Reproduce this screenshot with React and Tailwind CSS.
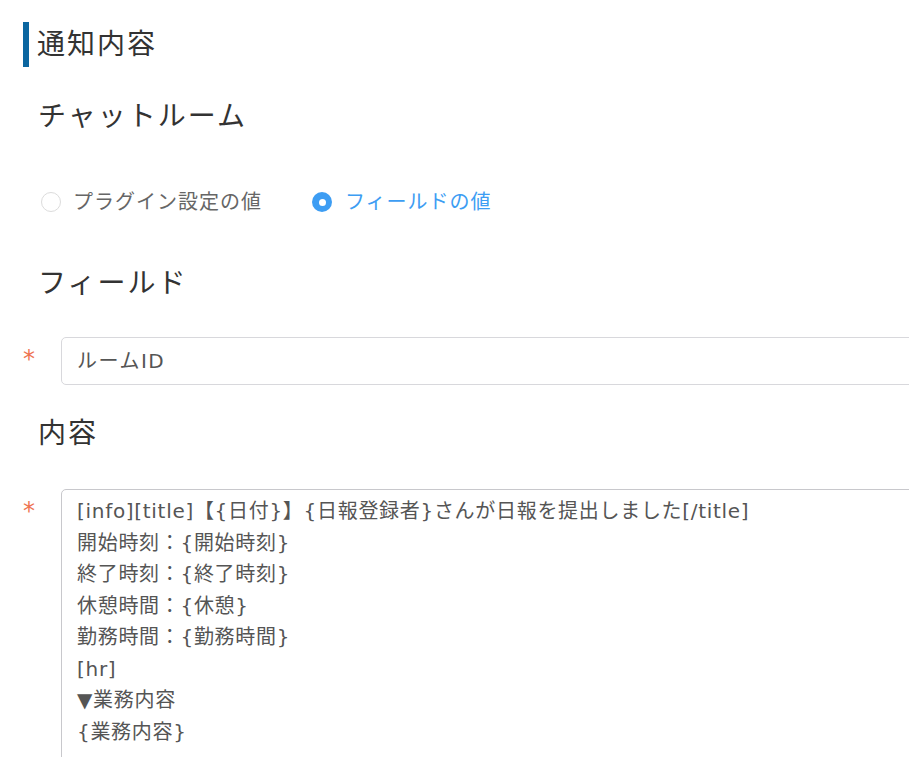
import React from 'react';

const lines = [
  '[info][title]【{日付}】{日報登録者}さんが日報を提出しました[/title]',
  '開始時刻：{開始時刻}',
  '終了時刻：{終了時刻}',
  '休憩時間：{休憩}',
  '勤務時間：{勤務時間}',
  '[hr]',
  '▼業務内容',
  '{業務内容}',
  '',
];

const App = () => {
  return (
    <div className="w-[909px] h-[757px] overflow-hidden bg-white text-[#333] font-['DejaVu_Sans','Noto_Sans_CJK_JP',sans-serif]">
      <div className="w-[1100px]">
        {/* section title */}
        <div className="flex items-center pt-[22px] pl-[23px]">
          <div className="w-[6px] h-[45px] bg-[#0b66a0]" />
          <h2 className="ml-[8px] text-[28px] leading-[45px] tracking-[2px] text-[#333]">通知内容</h2>
        </div>

        {/* chat room */}
        <h3 className="pl-[38px] mt-[28px] text-[28px] leading-[44px] tracking-[2px] text-[#333]">チャットルーム</h3>

        <div className="flex items-center pl-[41px] mt-[48px] h-[30px] text-[20px] tracking-[1px]">
          <label className="flex items-center gap-[12px] text-[#666]">
            <span className="w-[20px] h-[20px] rounded-full border border-[#dcdcdc] bg-white" />
            プラグイン設定の値
          </label>
          <label className="flex items-center gap-[13px] ml-[50px] text-[#3d9df3]">
            <span className="w-[20px] h-[20px] rounded-full bg-[#3d9df3] flex items-center justify-center">
              <span className="w-[7px] h-[7px] rounded-full bg-white" />
            </span>
            フィールドの値
          </label>
        </div>

        {/* field */}
        <h3 className="pl-[38px] mt-[45px] text-[28px] leading-[44px] tracking-[2px] text-[#333]">フィールド</h3>

        <div className="flex items-start mt-[31px]">
          <span className="w-[61px] pl-[23px] pt-[12px] text-[#ee7350] text-[24px] leading-[20px]">*</span>
          <div className="flex-1 h-[48px] border border-[#d8d8dc] rounded-[5px] pl-[15px] flex items-center text-[20px] tracking-[1.5px] text-[#555]">
            ルームID
          </div>
        </div>

        {/* content */}
        <h3 className="pl-[38px] mt-[27px] text-[28px] leading-[44px] tracking-[2px] text-[#333]">内容</h3>

        <div className="flex items-start mt-[33px]">
          <span className="w-[61px] pl-[23px] pt-[12px] text-[#ee7350] text-[24px] leading-[20px]">*</span>
          <div className="flex-1 border border-[#c8c8cc] rounded-[5px] pl-[15px] pt-[6px] text-[20px] leading-[31.5px] tracking-[0.7px] text-[#555]">
            {lines.map((l, i) => (
              <div key={i} className="h-[31.5px] whitespace-pre">{l}</div>
            ))}
          </div>
        </div>
      </div>
    </div>
  );
};

export default App;
